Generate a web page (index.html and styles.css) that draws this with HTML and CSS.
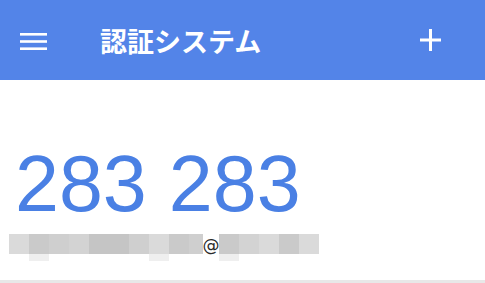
FILE: index.html
```html
<!DOCTYPE html>
<html lang="ja">
<head>
    <meta charset="UTF-8">
    <meta name="viewport" content="width=device-width, initial-scale=1.0">
    <title>認証システム</title>
    <link rel="stylesheet" href="styles.css">
</head>
<body>
    <!-- ヘッダー -->
    <header class="app-bar">
        <button class="icon-btn menu-btn" aria-label="メニュー">
            <svg width="27" height="17" viewBox="0 0 27 17">
                <rect x="0" y="0" width="27" height="2.6" fill="#fff"/>
                <rect x="0" y="7.2" width="27" height="2.6" fill="#fff"/>
                <rect x="0" y="14.4" width="27" height="2.6" fill="#fff"/>
            </svg>
        </button>
        <h1 class="title">認証システム</h1>
        <button class="icon-btn add-btn" aria-label="追加">
            <svg width="21" height="22" viewBox="0 0 21 22">
                <rect x="9" y="0" width="3" height="22" fill="#fff"/>
                <rect x="0" y="9.5" width="21" height="3" fill="#fff"/>
            </svg>
        </button>
    </header>

    <!-- アカウント -->
    <main class="account">
        <div class="code">283 283</div>
        <div class="email">
            <div class="mosaic">
                <span class="px s1"></span>
                <span class="px s4"><i class="drip"></i></span>
                <span class="px s3"></span>
                <span class="px s2"></span>
                <span class="px s5"></span>
                <span class="px s5"></span>
                <span class="px s3"></span>
                <span class="px s1"><i class="drip"></i></span>
                <span class="px s4"></span>
                <span class="px s3 narrow"></span>
            </div>
            <span class="at">@</span>
            <div class="mosaic">
                <span class="px s4"><i class="drip"></i></span>
                <span class="px s2"></span>
                <span class="px s1"></span>
                <span class="px s4"></span>
                <span class="px s1"></span>
            </div>
        </div>
    </main>
    <div class="divider"></div>
</body>
</html>
```

FILE: styles.css
```css
* {
    margin: 0;
    padding: 0;
    box-sizing: border-box;
}

body {
    font-family: "Liberation Sans", "Noto Sans CJK JP", sans-serif;
    background: #fff;
    width: 485px;
}

.app-bar {
    height: 80px;
    background: #5384e8;
    display: flex;
    align-items: center;
    color: #fff;
}

.icon-btn {
    border: none;
    background: none;
    display: flex;
    align-items: center;
    justify-content: center;
    cursor: pointer;
}

.menu-btn {
    margin-left: 20px;
    margin-top: 2px;
}

.title {
    font-family: "Noto Sans CJK JP", sans-serif;
    font-size: 27px;
    font-weight: 700;
    margin-left: 53px;
}

.add-btn {
    margin-left: auto;
    margin-right: 44px;
}

.account {
    height: 200px;
    padding: 64px 0 0 15px;
}

.code {
    font-size: 79px;
    line-height: 79px;
    color: #4a80e4;
}

.email {
    display: flex;
    margin-top: 11px;
    margin-left: -6px;
    height: 27px;
}

.mosaic {
    display: flex;
}

.px {
    position: relative;
    width: 20px;
    height: 20px;
}

.px.narrow {
    width: 14px;
}

.drip {
    position: absolute;
    left: 0;
    top: 20px;
    width: 20px;
    height: 7px;
    background: #efefef;
}

.s1 { background: #dadada; }
.s2 { background: #d3d3d3; }
.s3 { background: #cfcfcf; }
.s4 { background: #cacaca; }
.s5 { background: #c5c5c5; }

.at {
    width: 16px;
    height: 20px;
    display: flex;
    justify-content: center;
    font-family: "DejaVu Sans", sans-serif;
    font-size: 17px;
    line-height: 23px;
    color: #2a2a2a;
}

.divider {
    height: 10px;
    background: #e8e8e8;
}
```
